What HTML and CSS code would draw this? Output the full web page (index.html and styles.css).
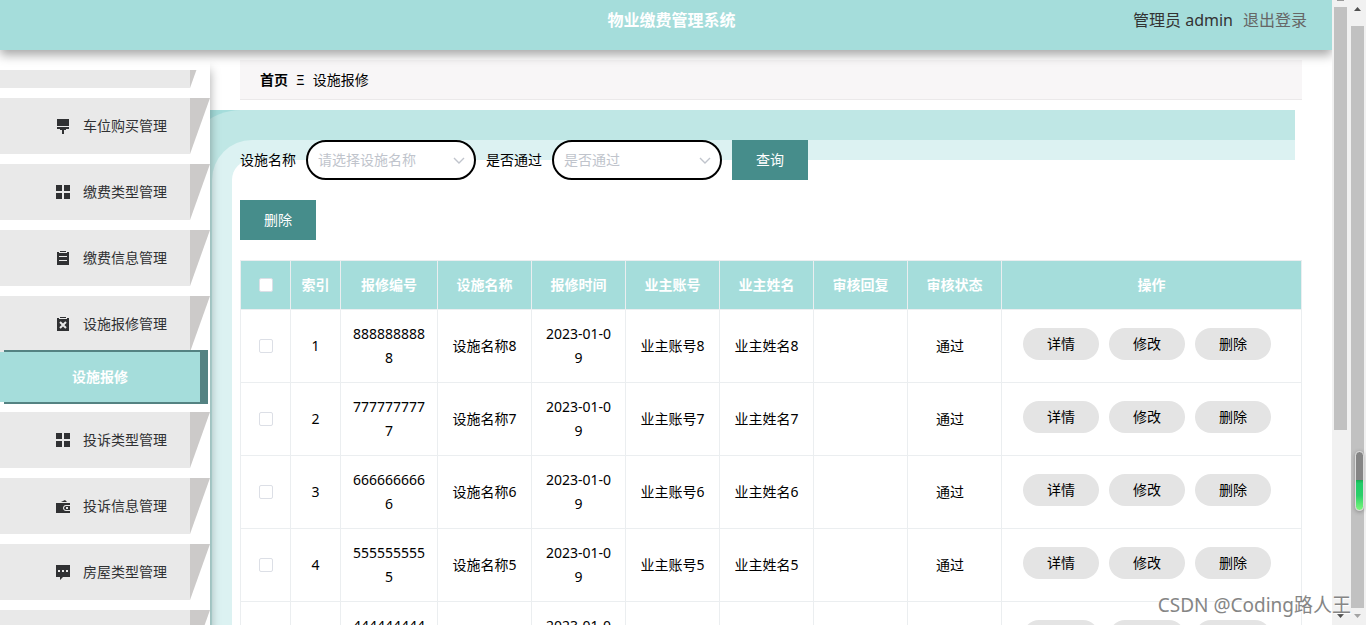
FILE: index.html
```html
<!DOCTYPE html>
<html lang="zh-CN">
<head>
<meta charset="utf-8">
<title>物业缴费管理系统</title>
<link rel="stylesheet" href="styles.css">
</head>
<body>
<div class="app">
  <header class="header">
    <h1 class="title">物业缴费管理系统</h1>
    <div class="user"><span>管理员 admin</span><a class="logout" href="#">退出登录</a></div>
  </header>
  <div class="body">
    <aside class="sidebar">
      <nav class="menu-view">
        <ul class="menu">
          <li><a class="menu-item" href="#"></a></li>
          <li><a class="menu-item" href="#">
            <svg class="icon" viewBox="0 0 16 16"><path d="M2 1h12v7H2zM2 9h12v2h-3v1H9v4H7v-4H5v-1H2z"/></svg>车位购买管理</a></li>
          <li><a class="menu-item" href="#">
            <svg class="icon" viewBox="0 0 16 16"><path d="M1 1h6v6H1zM9 1h6v6H9zM1 9h6v6H1zM9 9h6v6H9z"/></svg>缴费类型管理</a></li>
          <li><a class="menu-item" href="#">
            <svg class="icon" viewBox="0 0 16 16"><path fill-rule="evenodd" d="M5 1h6v1H5zM2 2h2v1h8V2h2v13H2zM4 6v1h8V6zM4 10v1h8v-1z"/></svg>缴费信息管理</a></li>
          <li><a class="menu-item" href="#">
            <svg class="icon" viewBox="0 0 16 16"><path d="M5 1h6v1H5zM2 2h2v1h8V2h2v13H2z"/><path class="icon-line" d="M5 6l6 6M11 6l-6 6"/></svg>设施报修管理</a>
            <a class="submenu-item" href="#">设施报修</a></li>
          <li><a class="menu-item" href="#">
            <svg class="icon" viewBox="0 0 16 16"><path d="M1 1h6v6H1zM9 1h6v6H9zM1 9h6v6H1zM9 9h6v6H9z"/></svg>投诉类型管理</a></li>
          <li><a class="menu-item" href="#">
            <svg class="icon" viewBox="0 0 16 16"><path d="M6 4l4-2 2 2zM1 5h14v2h-4c-4 0-4 6 0 6h4v2H1z"/><path fill-rule="evenodd" d="M11 8h4v4h-4c-2.500 0-2.500-4 0-4zM11 9v2h2V9z"/></svg>投诉信息管理</a></li>
          <li><a class="menu-item" href="#">
            <svg class="icon" viewBox="0 0 16 16"><path fill-rule="evenodd" d="M1 1h14v12H8l-3 3v-3H1zM3 6v2h2V6zM7 6v2h2V6zM11 6v2h2V6z"/></svg>房屋类型管理</a></li>
          <li><a class="menu-item" href="#"></a></li>
        </ul>
      </nav>
    </aside>
    <main class="main">
      <nav class="breadcrumb" aria-label="位置"><strong>首页</strong><span class="separator">Ξ</span><span>设施报修</span></nav>
      <section class="content">
        <div class="backdrop"></div>
        <form class="toolbar">
          <label for="facility">设施名称</label>
          <span class="select-box"><select id="facility" class="select"><option>请选择设施名称</option></select><svg class="chevron" viewBox="0 0 12 12"><path d="M1 4l5 5 5-5"/></svg></span>
          <label for="passed">是否通过</label>
          <span class="select-box"><select id="passed" class="select"><option>是否通过</option></select><svg class="chevron" viewBox="0 0 12 12"><path d="M1 4l5 5 5-5"/></svg></span>
          <button class="button" type="button">查询</button>
        </form>
        <div class="actions"><button class="button" type="button">删除</button></div>
        <table class="table">
          <colgroup><col class="col-small"><col class="col-small"><col class="col-number"><col><col><col><col><col><col><col class="col-actions"></colgroup>
          <thead>
            <tr><th><input class="check" type="checkbox" aria-label="全选"></th><th>索引</th><th>报修编号</th><th>设施名称</th><th>报修时间</th><th>业主账号</th><th>业主姓名</th><th>审核回复</th><th>审核状态</th><th>操作</th></tr>
          </thead>
          <tbody>
            <tr><td><input class="check" type="checkbox" aria-label="选择1"></td><td>1</td><td>8888888888</td><td>设施名称8</td><td>2023-01-09</td><td>业主账号8</td><td>业主姓名8</td><td></td><td class="state">通过</td><td><div class="row-actions"><button class="pill" type="button">详情</button><button class="pill" type="button">修改</button><button class="pill" type="button">删除</button></div></td></tr>
            <tr><td><input class="check" type="checkbox" aria-label="选择2"></td><td>2</td><td>7777777777</td><td>设施名称7</td><td>2023-01-09</td><td>业主账号7</td><td>业主姓名7</td><td></td><td class="state">通过</td><td><div class="row-actions"><button class="pill" type="button">详情</button><button class="pill" type="button">修改</button><button class="pill" type="button">删除</button></div></td></tr>
            <tr><td><input class="check" type="checkbox" aria-label="选择3"></td><td>3</td><td>6666666666</td><td>设施名称6</td><td>2023-01-09</td><td>业主账号6</td><td>业主姓名6</td><td></td><td class="state">通过</td><td><div class="row-actions"><button class="pill" type="button">详情</button><button class="pill" type="button">修改</button><button class="pill" type="button">删除</button></div></td></tr>
            <tr><td><input class="check" type="checkbox" aria-label="选择4"></td><td>4</td><td>5555555555</td><td>设施名称5</td><td>2023-01-09</td><td>业主账号5</td><td>业主姓名5</td><td></td><td class="state">通过</td><td><div class="row-actions"><button class="pill" type="button">详情</button><button class="pill" type="button">修改</button><button class="pill" type="button">删除</button></div></td></tr>
            <tr><td><input class="check" type="checkbox" aria-label="选择5"></td><td>5</td><td>4444444444</td><td>设施名称4</td><td>2023-01-09</td><td>业主账号4</td><td>业主姓名4</td><td></td><td class="state">通过</td><td><div class="row-actions"><button class="pill" type="button">详情</button><button class="pill" type="button">修改</button><button class="pill" type="button">删除</button></div></td></tr>
          </tbody>
        </table>
      </section>
    </main>
  </div>
</div>
<div class="scrollbar scrollbar-inner"><span class="stub"></span><span class="thumb"></span><svg class="arrow" viewBox="0 0 7 4"><path d="M0 0h7L3.500 4z"/></svg></div>
<div class="scrollbar scrollbar-outer"><svg class="arrow" viewBox="0 0 7 4"><path d="M0 4h7L3.500 0z"/></svg><span class="thumb"></span><svg class="arrow arrow-off" viewBox="0 0 7 4"><path d="M0 0h7L3.500 4z"/></svg></div>
<div class="meter"></div>
<div class="watermark">CSDN @Coding路人王</div>
</body>
</html>
```

FILE: styles.css
```css
* { box-sizing: border-box; }

body {
  display: flex;
  height: 100vh;
  margin: 0;
  overflow: hidden;
  position: relative;
  background: #fff;
  color: #000;
  font: 14px/24px "Noto Sans", "Noto Sans CJK SC", sans-serif;
}

a { color: inherit; text-decoration: none; }
button, select { font: inherit; }

.app {
  flex: 1;
  min-width: 0;
  display: flex;
  flex-direction: column;
  overflow: hidden;
}

.header {
  display: grid;
  grid-template-columns: 1fr auto 1fr;
  flex: none;
  position: relative;
  z-index: 3;
  height: 50px;
  padding: 0 25px 0 36px;
  background: #a5dddb;
  box-shadow: 0 5px 10px rgba(0, 0, 0, 0.35);
  font-size: 16px;
  line-height: 40px;
}

.title {
  grid-column: 2;
  margin: 0;
  color: #fff;
  font-size: 16px;
  font-weight: 700;
}

.user {
  display: flex;
  justify-content: flex-end;
  gap: 10px;
  color: #333;
}

.logout { color: #666; }

.body { display: flex; flex: 1; min-height: 0; }

.sidebar {
  flex: none;
  position: relative;
  z-index: 2;
  width: 210px;
  margin-top: 10px;
  padding-top: 10px;
  background: #fff;
  box-shadow: 0 10px 10px rgba(0, 0, 0, 0.35);
}

.menu-view { height: 100%; overflow: hidden; }

.menu {
  display: flex;
  flex-direction: column;
  gap: 10px;
  margin: -38px 0 0;
  padding: 0;
  list-style: none;
}

.menu-item {
  display: flex;
  align-items: center;
  gap: 12px;
  position: relative;
  width: 190px;
  height: 56px;
  padding-left: 55px;
  background: #e9e9e9;
  color: #303133;
}

.menu-item::after {
  content: "";
  position: absolute;
  top: 0;
  left: 100%;
  width: 20px;
  height: 100%;
  background: #cccac9;
  clip-path: polygon(0 0, 100% 0, 0 100%);
}

.icon { flex: none; width: 16px; height: 16px; fill: #303133; }
.icon-line { fill: none; stroke: #e9e9e9; stroke-width: 2; }

.submenu-item {
  display: block;
  position: relative;
  width: 200px;
  background: #a5dddb;
  box-shadow: 6px 0 0 2px #548282;
  color: #fff;
  font-weight: 700;
  line-height: 50px;
  text-align: center;
}

.main { flex: 1; min-width: 0; padding-top: 10px; }

.breadcrumb {
  height: 40px;
  margin: 0 30px 10px;
  padding: 0 20px;
  border-bottom: 1px solid #ebe9ea;
  background: #f8f6f7;
  line-height: 39px;
}

.separator { margin: 0 8px; }

.content { position: relative; height: 100%; padding: 30px 30px 0; }

.backdrop {
  position: absolute;
  z-index: -1;
  inset: 0 37px 0 0;
  overflow: hidden;
  background: #a5dddb;
}

.backdrop::before {
  content: "";
  position: absolute;
  inset: 50px -80px -80px 22px;
  border-radius: 20px;
  background: #fff;
  box-shadow: 0 0 0 20px #dcf2f2, 0 0 0 50px #bfe7e5;
}

.toolbar { display: flex; align-items: center; gap: 10px; }
.select-box { position: relative; }

.select {
  display: block;
  width: 170px;
  height: 40px;
  padding: 0 10px;
  border: 2px solid #000;
  border-radius: 20px;
  appearance: none;
  background: #fff;
  color: #c0c4cc;
}

.chevron {
  position: absolute;
  top: 14px;
  right: 11px;
  width: 12px;
  height: 12px;
  fill: none;
  stroke: #c0c4cc;
  stroke-width: 1.4;
  pointer-events: none;
}

.button {
  width: 76px;
  height: 40px;
  padding: 0;
  border: 0;
  background: #468d8b;
  color: #fff;
}

.actions { display: flex; margin: 20px 0; }

.table {
  width: 100%;
  border-collapse: collapse;
  table-layout: fixed;
  text-align: center;
}

.col-small { width: 50px; }
.col-number { width: 97px; }
.col-actions { width: 300px; }

.table th, .table td {
  padding: 12px 11px;
  border: 1px solid #ebeef0;
  word-break: break-all;
}

.table th { padding: 12px 5px; background: #a5dddb; color: #fff; font-weight: 700; }
.table .state { padding-right: 20px; }

.check {
  display: block;
  width: 14px;
  height: 14px;
  margin: 0 auto;
  border: 1px solid #dcdfe6;
  border-radius: 2px;
  appearance: none;
  background: #fff;
}

.row-actions { display: flex; gap: 10px; padding: 0 10px 4px; }

.pill {
  width: 76px;
  height: 32px;
  padding: 0;
  border: 0;
  border-radius: 16px;
  background: #e4e4e4;
  color: #000;
}

.scrollbar {
  display: flex;
  flex-direction: column;
  align-items: center;
  flex: none;
  width: 17px;
  padding-bottom: 7px;
  background: #f1f1f1;
}

.thumb { width: 13px; background: #c1c1c1; }
.stub { width: 7px; height: 1px; background: #999; }
.scrollbar-inner .thumb { height: 68.4%; margin: 6px 0 auto; }
.scrollbar-outer { padding-top: 7px; }
.scrollbar-outer .thumb { flex: 1; margin: 15px 0 6px; }
.arrow { flex: none; width: 7px; height: 4px; fill: #505050; }
.arrow-off { fill: #a3a3a3; }

.meter {
  position: absolute;
  z-index: 4;
  top: 451px;
  right: 2px;
  width: 9px;
  height: 60px;
  border: 1px solid #ddd;
  border-radius: 5px;
  background: linear-gradient(#858585 48%, #18a850 48%, #20cc68 54%, #2bcf6a 75%, #7cf87c);
  box-shadow: 0 1px 4px rgba(0, 0, 0, 0.3);
}

.watermark {
  position: absolute;
  z-index: 5;
  right: 15px;
  bottom: 8px;
  color: #858585;
  font-size: 19px;
  font-weight: 400;
  text-shadow: 1px 1px 1px #fff;
}
```
